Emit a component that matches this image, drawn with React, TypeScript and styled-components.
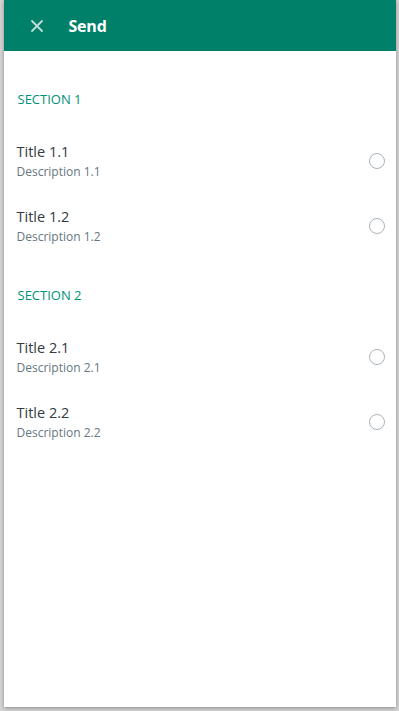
import React, { FC } from 'react';
import styled, { createGlobalStyle } from 'styled-components';

const GlobalStyle = createGlobalStyle`
  html, body {
    margin: 0;
    padding: 0;
    background: #d4d4d4;
  }
  body {
    font-family: "Open Sans", "Noto Sans", sans-serif;
  }
`;

const Page = styled.div`
  width: 399px;
  height: 711px;
  display: flex;
  justify-content: center;
  align-items: flex-start;
  overflow: hidden;
`;

const Panel = styled.div`
  width: 392px;
  height: 707px;
  background: #fff;
  display: flex;
  flex-direction: column;
  box-shadow: 0 1px 4px rgba(0, 0, 0, 0.35);
`;

const Header = styled.header`
  height: 51px;
  flex-shrink: 0;
  background: #008069;
  display: flex;
  align-items: center;
  padding-left: 23px;
  gap: 22px;
`;

const CloseButton = styled.button`
  width: 20px;
  height: 20px;
  border: 0;
  padding: 0;
  background: transparent;
  display: flex;
  align-items: center;
  justify-content: center;
  cursor: pointer;
`;

const HeaderTitle = styled.h1`
  margin: 0;
  color: #fff;
  font-size: 16px;
  font-weight: 700;
  letter-spacing: -0.2px;
`;

const List = styled.div`
  padding-top: 12px;
`;

const SectionLabel = styled.div`
  padding: 26px 14px 20px 14px;
  line-height: 20px;
  font-size: 13px;
  color: #00917a;
  text-transform: uppercase;
`;

const Row = styled.label`
  height: 65px;
  display: flex;
  align-items: center;
  padding: 0 11px 0 13px;
  cursor: pointer;
`;

const RowText = styled.div`
  flex: 1;
  display: flex;
  flex-direction: column;
`;

const Title = styled.span`
  font-size: 14.5px;
  line-height: 20px;
  color: #333b40;
`;

const Desc = styled.span`
  font-size: 12px;
  line-height: 20px;
  color: #667781;
`;

const Radio = styled.span`
  width: 14px;
  height: 14px;
  margin-top: -2px;
  border-radius: 50%;
  border: 1.6px solid #aab4ba;
`;

const sections = [
  { label: 'Section 1', items: ['1.1', '1.2'] },
  { label: 'Section 2', items: ['2.1', '2.2'] },
];

const App: FC = () => {
  return (
    <>
      <GlobalStyle />
      <Page>
        <Panel>
          <Header>
            <CloseButton aria-label='close'>
              <svg width='14' height='14' viewBox='0 0 14 14'>
                <path
                  d='M2 2 L12 12 M12 2 L2 12'
                  stroke='rgba(255,255,255,0.75)'
                  strokeWidth='1.8'
                  strokeLinecap='round'
                />
              </svg>
            </CloseButton>
            <HeaderTitle>Send</HeaderTitle>
          </Header>
          <List>
            {sections.map((s) => (
              <div key={s.label}>
                <SectionLabel>{s.label}</SectionLabel>
                {s.items.map((n) => (
                  <Row key={n}>
                    <RowText>
                      <Title>Title {n}</Title>
                      <Desc>Description {n}</Desc>
                    </RowText>
                    <Radio />
                  </Row>
                ))}
              </div>
            ))}
          </List>
        </Panel>
      </Page>
    </>
  );
};

export default App;
